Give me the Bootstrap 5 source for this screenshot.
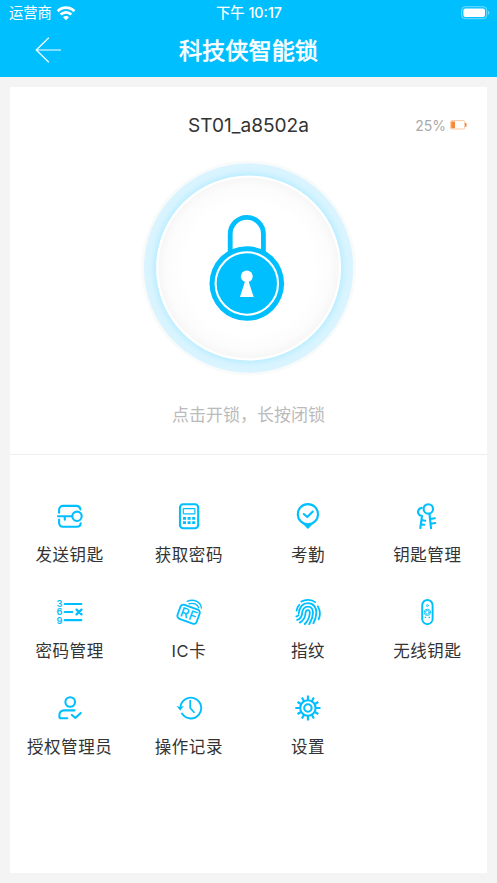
<!DOCTYPE html>
<html lang="zh-CN">
<head>
<meta charset="utf-8">
<meta name="viewport" content="width=device-width, initial-scale=1">
<title>科技侠智能锁</title>
<link href="https://cdn.jsdelivr.net/npm/bootstrap@5.3.0/dist/css/bootstrap.min.css" rel="stylesheet">
<style>
  :root { --sky: #00bfff; }
  body { background: #f4f4f4; font-family: Inter, "Noto Sans CJK SC", sans-serif; color: #333; height: 883px; overflow: hidden; }
  svg { display: block; }
  .app-top { background: var(--sky); height: 77px; }
  .status-line { height: 26px; font-size: 14.3px; line-height: 26px; padding: 0 7px 0 9px; }
  .status-line > * { flex: 1 1 0; }
  .clock { font-weight: 500; letter-spacing: 0; padding-right: 1px; }
  .title-line { height: 48px; grid-template-columns: 1fr auto 1fr; }
  .title-line h1 { font-size: 23.2px; line-height: 46px; padding-top: 2px; font-weight: 400; -webkit-text-stroke: .6px #fff; }
  .back { padding-left: 35px; }
  .panel { margin: 10px 10px 0 10px; height: 786px; }
  .lock-area { height: 368px; border-bottom: 1px solid #eee; }
  .name-line { height: 73px; grid-template-columns: 1fr auto 1fr; padding-top: 3px; }
  .device { font-size: 19.1px; }
  .level { font-size: 14px; color: #aaa; padding-right: 20px; gap: 4px; }
  .hint { font-size: 17px; line-height: 26px; color: #bbb; margin-top: 26px; }
  .tiles { padding-top: 47px; }
  .tile { height: 96px; font-size: 16.5px; letter-spacing: .6px; line-height: 26px; }
  .tile svg { width: 28px; height: 28px; margin-bottom: 12px; fill: none; stroke: var(--sky); stroke-width: 2.1; stroke-linecap: round; stroke-linejoin: round; }
  .tile .solid { fill: var(--sky); stroke: none; }
  .tile .glyph { fill: var(--sky); stroke: none; font-family: Inter, sans-serif; letter-spacing: 0; }
</style>
<script src="https://cdn.jsdelivr.net/npm/bootstrap@5.3.0/dist/js/bootstrap.bundle.min.js"></script>
</head>
<body>
<header class="app-top text-white">
  <div class="status-line d-flex align-items-center">
    <div class="d-flex align-items-center gap-1">
      <span>运营商</span>
      <svg width="20" height="15" viewBox="0 0 20 15" fill="none" stroke="#fff" stroke-width="2.8"><path d="M1.6 5.2C6.2.5 13.8.5 18.4 5.2M4.7 8.6c3-2.9 7.6-2.9 10.6 0"/><path d="M10 14.2l-3-3c1.7-1.6 4.3-1.6 6 0z" fill="#fff" stroke="none"/></svg>
    </div>
    <div class="clock text-center">下午 10:17</div>
    <div class="d-flex justify-content-end">
      <svg width="29" height="14" viewBox="0 0 29 14"><rect x=".7" y=".7" width="25" height="12" rx="3.5" fill="none" stroke="#fff" stroke-opacity=".45"/><rect x="2.4" y="2.4" width="21.6" height="8.6" rx="2" fill="#fff"/><path d="M27.2 4.7c1.7.8 1.7 3.2 0 4z" fill="#fff" fill-opacity=".5"/></svg>
    </div>
  </div>
  <div class="title-line d-grid align-items-center">
    <div class="back"><svg width="27" height="26" viewBox="0 0 27 26" fill="none" stroke="#fff" stroke-width="1.2"><path d="M13.8.8L1.2 13l12.6 12.2M1.2 13H26"/></svg></div>
    <h1 class="m-0 pb-0">科技侠智能锁</h1>
    <div></div>
  </div>
</header>

<main class="panel bg-white">
  <section class="lock-area d-flex flex-column align-items-center">
    <div class="name-line d-grid align-items-center w-100">
      <div></div>
      <div class="device">ST01_a8502a</div>
      <div class="level d-flex align-items-center justify-content-end">25%
        <svg width="17" height="10" viewBox="0 0 17 10"><rect x=".6" y=".6" width="14" height="8.4" rx="1" fill="none" stroke="#f9c9a6" stroke-width="1"/><path d="M1.2 1.4h3.8v6.8H1.2zM15 3h1.5v3.8H15z" fill="#f5873b"/></svg>
      </div>
    </div>
    <svg width="216" height="216" viewBox="0.4 0 216 216">
      <defs>
        <radialGradient id="ring" gradientUnits="userSpaceOnUse" cx="108" cy="108" r="105">
          <stop offset=".87" stop-color="#b9edff"/><stop offset=".93" stop-color="#d5f3ff"/><stop offset="1" stop-color="#dcf5ff"/>
        </radialGradient>
        <radialGradient id="dial" gradientUnits="userSpaceOnUse" cx="108" cy="108" r="91">
          <stop offset=".7" stop-color="#fff"/><stop offset=".9" stop-color="#fcfcfc"/><stop offset="1" stop-color="#f6f6f6"/>
        </radialGradient>
      </defs>
      <circle cx="108" cy="108" r="107.5" fill="#f9fafa"/>
      <circle cx="108" cy="108" r="104.7" fill="url(#ring)"/>
      <circle cx="108" cy="108" r="92.5" fill="#fff"/>
      <circle cx="108" cy="108" r="90.3" fill="url(#dial)"/>
      <path d="M89.6 100V74a16.6 16.6 0 0 1 33.2 0v26" fill="#fff" stroke="#00bfff" stroke-width="4.8"/>
      <circle cx="106.2" cy="123.5" r="37.3" fill="#00bfff"/>
      <circle cx="106.2" cy="123.5" r="31.2" fill="none" stroke="#fff" stroke-width="2.1"/>
      <circle cx="106.2" cy="116.3" r="5.9" fill="#fff"/>
      <path d="M104.9 120h2.6l5.6 17H99.3z" fill="#fff"/>
    </svg>
    <div class="hint">点击开锁，长按闭锁</div>
  </section>

  <section class="tiles row row-cols-4 g-0 text-center">
    <div class="tile col d-flex flex-column align-items-center">
      <svg viewBox="0 0 28 28"><path d="M3.1 10.8V7.5A3.8 3.8 0 0 1 6.9 3.9H20.5A4 4 0 0 1 24.4 7.4M3.1 17.5v3.6a3.7 3.7 0 0 0 3.8 3.7H21a3.8 3.8 0 0 0 3.7-3.6M2 14.3H16.2M8.8 14.5v3.2"/><circle cx="21" cy="14.3" r="4.7"/></svg>
      发送钥匙
    </div>
    <div class="tile col d-flex flex-column align-items-center">
      <svg viewBox="0 0 28 28"><rect x="5" y="2.2" width="18.2" height="24" rx="3.2"/><rect x="8.3" y="6.7" width="11.6" height="5.1" rx=".5" stroke-width="1.2"/><path class="solid" d="M8 14.9h3v2.8H8zM12.6 14.9h3v2.8h-3zM17.2 14.9h3v2.8h-3zM8 19.3h3v2.8H8zM12.6 19.3h3v2.8h-3zM17.2 19.3h3v2.8h-3z"/></svg>
      获取密码
    </div>
    <div class="tile col d-flex flex-column align-items-center">
      <svg viewBox="0 0 28 28"><circle cx="13.9" cy="12.2" r="10.1"/><path class="solid" d="M7.7 20.8c3.6 2.6 8.8 2.6 12.4 0L13.9 27z"/><path d="M9.8 12l3.5 3 5.5-5.4"/></svg>
      考勤
    </div>
    <div class="tile col d-flex flex-column align-items-center">
      <svg viewBox="0 0 28 28"><circle cx="15.3" cy="6.9" r="4.7"/><path d="M16.5 12.2L18 26.2M17.3 17l4.6-.8M17.7 21.8l4.6-.8M8.6 5.9a4.1 4.1 0 0 0-1.8 7.4l2.2.7L7.3 26M8.4 18l3.8.8M7.8 22.4l3.4.4"/></svg>
      钥匙管理
    </div>
    <div class="tile col d-flex flex-column align-items-center">
      <svg viewBox="0 0 28 28"><text class="glyph" font-size="9.3" font-weight="600"><tspan x=".6" y="9.3">3</tspan><tspan x=".6" y="17.4">6</tspan><tspan x=".6" y="25.5">9</tspan></text><path d="M8.7 6H25.4M8.7 14h7.6M8.7 22.1H25.4"/><path d="M20.5 11.6l5 4.8m0-4.8l-5 4.8" stroke-width="2.3"/></svg>
      密码管理
    </div>
    <div class="tile col d-flex flex-column align-items-center">
      <svg viewBox="0 0 28 28"><g transform="rotate(20 13.6 16.2)"><rect x="3.4" y="8.8" width="20.4" height="14.9" rx="3.2" stroke-width="1.9"/><text class="glyph" x="5.3" y="21" font-size="13.4" font-weight="500" textLength="17">RF</text></g><path d="M12.2 3.4C19 .3 26 4.3 26.4 10.2M14 5.9c4.4-1.5 8.6.3 9.7 4" stroke-width="1.3"/></svg>
      <span>IC卡</span>
    </div>
    <div class="tile col d-flex flex-column align-items-center">
      <svg viewBox="0 0 28 28"><path stroke-width="1.8" d="M7.4 3.6c4.2-2.5 10-2.3 13.7.5M2.6 12.6C3 10 3.8 8.3 5.2 6.8M23.9 8.4c2.4 4.2 2.4 9.2.7 13M4.7 15.5C5.5 8.9 9 5.1 14 5.1c5.6 0 8.6 4.6 8.3 10-.2 3.8-1.2 7.1-2.9 10.2M2.3 18.5c1-.1 1.7-.4 2.2-1.2M3.2 21.900c3.200-.9 4.600-3.100 4.900-6.600.4-4.200 2.700-6.700 5.900-6.700 3.500 0 5.100 2.800 5 6.300-.2 4.300-1.700 8.100-3.800 11.300M5.800 24.600c3.600-1.900 5.500-5.100 5.700-9.300.1-2 .9-3.200 2.400-3.200 1.400 0 2 1.200 1.900 3-.3 4.400-2.100 8-5 10.900"/></svg>
      指纹
    </div>
    <div class="tile col d-flex flex-column align-items-center">
      <svg viewBox="0 0 28 28"><rect x="9.2" y="2" width="10.4" height="24.2" rx="5.2" stroke-width="1.9"/><circle cx="14.4" cy="7.6" r="1" stroke-width=".8"/><circle cx="14.4" cy="14.3" r="3.2" stroke-width=".9"/><circle cx="14.4" cy="14.3" r="1.9" stroke-width=".9"/><path class="solid" d="M11.7 18.7h1.5v1.3h-1.5zM15.600 18.700h1.500v1.300h-1.500z"/></svg>
      无线钥匙
    </div>
    <div class="tile col d-flex flex-column align-items-center">
      <svg viewBox="0 0 28 28"><circle cx="14.2" cy="8" r="4.8"/><path d="M18.5 16.4H7.9C5 16.4 3.4 18.3 3.4 21v1.5c0 1.2.6 1.8 1.8 1.8h6.1M15.9 20.9l3.5 3.2 5.3-5.2"/></svg>
      授权管理员
    </div>
    <div class="tile col d-flex flex-column align-items-center">
      <svg viewBox="0 0 28 28"><path d="M5.4 13.8A10.4 10.4 0 1 1 7 19.6" stroke-width="1.9"/><path class="solid" d="M1.5 11.9l3.7 1 3.8-1-3.8 4.5z"/><path d="M15.2 6.6V14l3.8 4.3" stroke-width="1.7"/></svg>
      操作记录
    </div>
    <div class="tile col d-flex flex-column align-items-center">
      <svg viewBox="0 0 28 28"><circle cx="13.9" cy="14" r="7.7"/><circle cx="13.9" cy="14" r="3.7"/><g stroke-linecap="butt"><path d="M13.9 6V1.4M13.9 22v4.6M5.9 14H1.3M21.9 14h4.6M9.9 7.07L7.9 3.6M17.9 7.07l2-3.47M9.9 20.93l-2 3.47M17.9 20.93l2 3.47M6.97 10L3.5 8M20.83 10l3.47-2M6.97 18L3.5 20M20.83 18l3.47 2"/></g></svg>
      设置
    </div>
  </section>
</main>
</body>
</html>
